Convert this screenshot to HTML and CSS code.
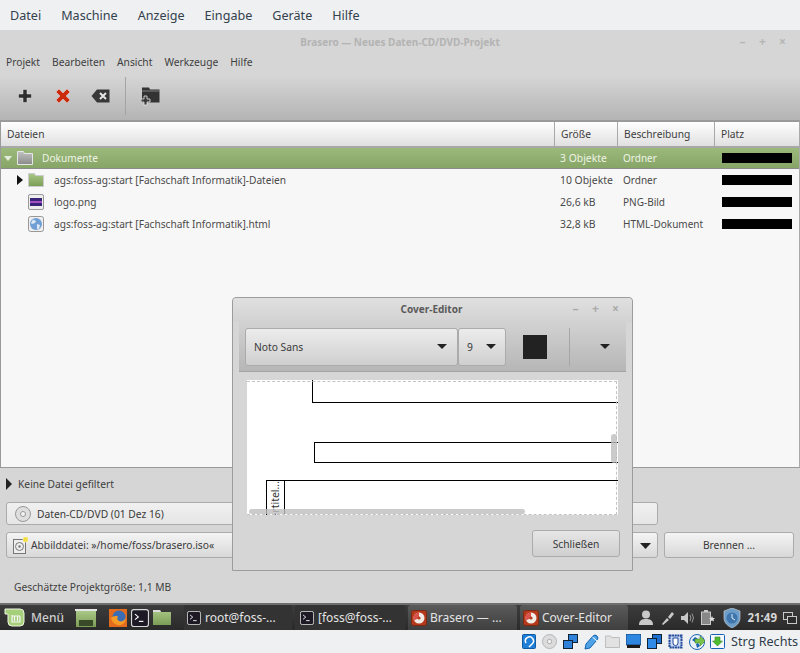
FILE: index.html
```html
<!DOCTYPE html>
<html lang="de">
<head>
<meta charset="utf-8">
<title>Brasero</title>
<link rel="stylesheet" href="styles.css">
</head>
<body>
<svg class="defs" width="0" height="0">
  <defs>
    <linearGradient id="gfolder" x1="0" y1="0" x2="0" y2="1"><stop offset="0" stop-color="#a9c786"/><stop offset="1" stop-color="#7b9d56"/></linearGradient>
    <linearGradient id="ggrey" x1="0" y1="0" x2="0" y2="1"><stop offset="0" stop-color="#c2c2c2"/><stop offset="1" stop-color="#8a8a8a"/></linearGradient>
    <symbol id="bras" viewBox="0 0 16 16"><rect x="0.5" y="0.5" width="15" height="15" rx="2" fill="#b5391c" stroke="#7d2a12"/><circle cx="8" cy="8" r="5.5" fill="#f2ece6"/><path d="M8 2.5A5.500 5.500 0 0 0 3 10.500L8 8z" fill="#d9534a"/><circle cx="8" cy="8" r="1.600" fill="#b5391c"/></symbol>
    <symbol id="term" viewBox="0 0 16 16"><rect x="0.5" y="0.5" width="15" height="15" rx="2" fill="#1d1a25" stroke="#d8d8d8"/><path d="M3.500 4.500L6.500 7L3.500 9.500" fill="none" stroke="#fff"/><path d="M7 11h4" stroke="#fff"/></symbol>
  </defs>
</svg>

<nav class="vm-menu">
  <span>Datei</span><span>Maschine</span><span>Anzeige</span><span>Eingabe</span><span>Geräte</span><span>Hilfe</span>
</nav>

<main class="app">
  <header class="app-title">
    <span class="app-title-text">Brasero — Neues Daten-CD/DVD-Projekt</span>
    <span class="wm-btns"><i>–</i><i>+</i><i>×</i></span>
  </header>
  <nav class="app-menu">
    <span>Projekt</span><span>Bearbeiten</span><span>Ansicht</span><span>Werkzeuge</span><span>Hilfe</span>
  </nav>
  <div class="toolbar">
    <svg class="tool" width="16" height="16" viewBox="0 0 16 16"><path d="M6 1.500h4v4.500h4.500v4H10v4.500H6V10H1.500V6H6z" fill="#2f2f2f" stroke="#e4e4e4" stroke-width=".5"/></svg>
    <svg class="tool tool-x" width="16" height="16" viewBox="0 0 16 16"><path d="M1 4l3-3 4 4 4-4 3 3-4 4 4 4-3 3-4-4-4 4-3-3 4-4z" fill="#cc2a0c" stroke="#e8d8d4" stroke-width=".5"/></svg>
    <svg class="tool tool-bs" width="19" height="14" viewBox="0 0 19 14"><path d="M6 0.500h12.500v13H6L0.500 7z" fill="#383838"/><path d="M9 4l6 6M15 4l-6 6" stroke="#e6e6e6" stroke-width="2"/></svg>
    <span class="tool-sep"></span>
    <svg class="tool" width="19" height="19" viewBox="0 0 19 19"><path d="M1 0.500h7l1 2h9.500v13H1z" fill="#333"/><path d="M1 4h17.500" stroke="#bbb" stroke-width=".6"/><path d="M3 9h3v3h3v3H6v3H3v-3H0v-3h3z" fill="#3a3a3a" stroke="#e8e8e8" stroke-width=".8"/></svg>
  </div>

  <section class="tree">
    <div class="tree-head">
      <div class="col-name">Dateien</div><div class="col-size">Größe</div><div class="col-desc">Beschreibung</div><div class="col-place">Platz</div>
    </div>
    <div class="tree-row tree-row-sel">
      <div class="col-name name-root">
        <svg class="expander" width="8" height="5" viewBox="0 0 8 5"><path d="M0 0h8L4 5z" fill="#e4ecd9"/></svg>
        <svg width="16" height="14" viewBox="0 0 16 14"><path d="M0.500 13.500V0.500h6l1 2h8v11z" fill="url(#ggrey)" stroke="#e6e6e6"/></svg>
        <span>Dokumente</span>
      </div>
      <div class="col-size">3 Objekte</div><div class="col-desc">Ordner</div><div class="col-place"><b class="bar"></b></div>
    </div>
    <div class="tree-row">
      <div class="col-name name-child">
        <svg class="expander-r" width="6" height="10" viewBox="0 0 6 10"><path d="M0 0l6 5-6 5z" fill="#111"/></svg>
        <svg width="16" height="14" viewBox="0 0 16 14"><path d="M0.500 13.500V0.500h6l1 2h8v11z" fill="url(#gfolder)" stroke="#ccc"/></svg>
        <span>ags:foss-ag:start [Fachschaft Informatik]-Dateien</span>
      </div>
      <div class="col-size">10 Objekte</div><div class="col-desc">Ordner</div><div class="col-place"><b class="bar"></b></div>
    </div>
    <div class="tree-row">
      <div class="col-name name-file">
        <svg width="16" height="16" viewBox="0 0 16 16"><rect x="0.500" y="0.500" width="15" height="15" rx="1.500" fill="#eee" stroke="#999"/><rect x="2" y="4" width="12" height="8" fill="#3a2478"/><path d="M2 7h12v2H2z" fill="#a24fc4"/></svg>
        <span>logo.png</span>
      </div>
      <div class="col-size">26,6 kB</div><div class="col-desc">PNG-Bild</div><div class="col-place"><b class="bar"></b></div>
    </div>
    <div class="tree-row">
      <div class="col-name name-file">
        <svg width="16" height="16" viewBox="0 0 16 16"><rect x="0.500" y="0.500" width="15" height="15" rx="2" fill="#eee" stroke="#999"/><circle cx="8" cy="8" r="6" fill="#6f9fd4"/><path d="M5 3.500l3 1.500-1 2-3 1-1-1zM9 8l3 1-1 4-2 0z" fill="#dfe9f4"/></svg>
        <span>ags:foss-ag:start [Fachschaft Informatik].html</span>
      </div>
      <div class="col-size">32,8 kB</div><div class="col-desc">HTML-Dokument</div><div class="col-place"><b class="bar"></b></div>
    </div>
  </section>

  <div class="filter">
    <svg width="6" height="12" viewBox="0 0 6 12"><path d="M0 0l6 6-6 6z" fill="#222"/></svg>
    <span>Keine Datei gefiltert</span>
  </div>
  <div class="disc-field">
    <svg width="16" height="16" viewBox="0 0 16 16"><circle cx="8" cy="8" r="7.500" fill="#dedede" stroke="#999"/><circle cx="8" cy="8" r="2.500" fill="#f4f4f4" stroke="#999"/></svg>
    <span>Daten-CD/DVD (01 Dez 16)</span>
  </div>
  <div class="action-row">
    <div class="image-field">
      <svg width="15" height="17" viewBox="0 0 15 17"><rect x="0.500" y="2.500" width="12" height="14" fill="#eee" stroke="#777"/><circle cx="6.500" cy="9.500" r="4" fill="none" stroke="#777"/><circle cx="6.500" cy="9.500" r="1.200" fill="#777"/><rect x="10" y="0" width="5" height="5" fill="#f0dc3c" stroke="#fff" stroke-width=".5"/></svg>
      <span>Abbilddatei: »/home/foss/brasero.iso«</span>
      <svg class="field-arrow" width="11" height="6" viewBox="0 0 11 6"><path d="M0 0h11L5.500 6z" fill="#222"/></svg>
    </div>
    <div class="burn-btn">Brennen ...</div>
  </div>
  <div class="estimate">Geschätzte Projektgröße: 1,1 MB</div>
</main>

<footer class="taskbar">
  <div class="menu-btn">
    <svg width="21" height="19" viewBox="0 0 21 19"><path d="M1 1h15a4 4 0 0 1 4 4v9a4 4 0 0 1-4 4H8a4 4 0 0 1-4-4V6H1z" fill="#a6cf7a" stroke="#eef6e4" stroke-width="1"/><path d="M8 7v7h8V8M10.500 13V8M13.500 13V8M8 8h8" fill="none" stroke="#f6f6f6" stroke-width="1.200"/></svg>
    <span>Menü</span>
  </div>
  <div class="launchers">
    <svg class="launch-show" width="22" height="18" viewBox="0 0 22 18"><rect x="0" y="0" width="22" height="2" fill="#e4e4e4"/><rect x="1" y="2" width="20" height="16" fill="url(#gfolder)"/><rect x="4" y="11" width="14" height="6" fill="#394a28"/></svg>
    <svg class="launch-ff" width="18" height="18" viewBox="0 0 18 18"><rect width="18" height="18" fill="#e26b1d"/><circle cx="10" cy="8" r="6.500" fill="#3a6db5"/><path d="M2 9c1 5 6 8 10 7 3-1 5-4 5-7-2 3-5 4-7 3-2-1-2-3-1-5-3 0-5 0-7 2z" fill="#f59c26"/></svg>
    <svg class="launch-term" width="18" height="18"><use href="#term"/></svg>
    <svg class="launch-folder" width="18" height="15" viewBox="0 0 18 15"><path d="M0 15V0h7l1 2h10v13z" fill="url(#gfolder)"/><path d="M0 0h7l1 2H0z" fill="#dcdcdc"/></svg>
  </div>
  <div class="task task-1"><svg width="14" height="14"><use href="#term"/></svg><span>root@foss-...</span></div>
  <div class="task task-2"><svg width="14" height="14"><use href="#term"/></svg><span>[foss@foss-...</span></div>
  <div class="task task-3"><svg width="16" height="16"><use href="#bras"/></svg><span>Brasero — ...</span></div>
  <div class="task task-4"><svg width="16" height="16"><use href="#bras"/></svg><span>Cover-Editor</span></div>
  <div class="tray">
    <svg width="14" height="15" viewBox="0 0 14 15"><circle cx="7" cy="4.500" r="4" fill="#c9c9c9"/><path d="M0 15c0-5 3-6 7-6s7 1 7 6z" fill="#c9c9c9"/></svg>
    <svg class="tray-wide" width="14" height="15" viewBox="0 0 14 15"><path d="M1 14l5-6 2 2-6 5zM7 7l4-5 2 2-4 5z" fill="#c9c9c9"/></svg>
    <svg width="14" height="12" viewBox="0 0 14 12"><path d="M0 4h3l4-4v12l-4-4H0z" fill="#c9c9c9"/><path d="M9 3q2 3 0 6M11 1.500q3 4.500 0 9" fill="none" stroke="#999"/></svg>
    <svg width="14" height="15" viewBox="0 0 14 15"><rect x="0.500" y="2" width="9" height="12.500" fill="#888" stroke="#c9c9c9"/><rect x="3" y="0" width="4" height="2" fill="#c9c9c9"/><path d="M11 6l1 2 2 0-1.500 1.500.5 2-2-1-2 1 .5-2L8 8h2z" fill="#ddd"/></svg>
    <svg class="tray-wide" width="18" height="20" viewBox="0 0 18 20"><path d="M9 0l8 3v7c0 5-4 8-8 10-4-2-8-5-8-10V3z" fill="#6d9ec9" stroke="#d8d8d8" stroke-width=".6"/><circle cx="9" cy="10" r="5.500" fill="#3f76ad"/><path d="M9 6v4l3 2" stroke="#e6eef6" fill="none"/></svg>
    <span class="clock">21:49</span>
    <svg width="14" height="12" viewBox="0 0 14 12"><rect x="0.500" y="0.500" width="9" height="7" fill="none" stroke="#c9c9c9"/><rect x="4.500" y="4.500" width="9" height="7" fill="#2d2d2d" stroke="#c9c9c9"/></svg>
  </div>
</footer>

<div class="statusbar">
  <svg width="14" height="15" viewBox="0 0 14 15"><rect x="0.500" y="0.500" width="13" height="14" rx="1" fill="#1f7fd6" stroke="#0d5aa5"/><path d="M4 9a4 4 0 1 1 6 1c-1 1-2 2-3 3" fill="none" stroke="#fff" stroke-width="1.500"/></svg>
  <svg width="15" height="15" viewBox="0 0 15 15"><circle cx="7.500" cy="7.500" r="7" fill="#dcdcdc" stroke="#b5b5b5"/><circle cx="7.500" cy="7.500" r="2.200" fill="#f2f2f2" stroke="#aaa"/></svg>
  <svg width="15" height="15" viewBox="0 0 15 15"><rect x="5.500" y="0.500" width="9" height="8" fill="#2f80d8" stroke="#123"/><rect x="0.500" y="6.500" width="9" height="8" fill="#2f80d8" stroke="#123"/></svg>
  <svg width="16" height="16" viewBox="0 0 16 16"><path d="M1 15l1-5 7-8q2-2 4 0t0 4l-7 8z" fill="#4fa2e6" stroke="#1260b0"/><path d="M8.500 3l4.500 4" stroke="#fff"/></svg>
  <svg class="tight" width="15" height="13" viewBox="0 0 15 13"><path d="M0.500 12.500V1h5l1 1.500h8v10z" fill="#e2e2e2" stroke="#bdbdbd"/></svg>
  <svg width="15" height="15" viewBox="0 0 15 15"><rect x="0" y="0" width="15" height="11" fill="#2d86e0" stroke="#12325a" stroke-width=".8"/><rect x="1" y="11" width="13" height="3" fill="#1a1a1a"/></svg>
  <svg width="15" height="15" viewBox="0 0 15 15"><rect x="5.500" y="0.500" width="9" height="9" fill="#1f6fd0" stroke="#123"/><rect x="0.500" y="4.500" width="9" height="10" fill="#2f8ae8" stroke="#123"/></svg>
  <svg width="15" height="15" viewBox="0 0 15 15"><rect x="1.500" y="1.500" width="12" height="12" fill="#c8d8f2" stroke="#20479a" stroke-dasharray="2 .6" stroke-width="2"/><path d="M5 4v5a2.500 2.500 0 0 0 5 0V4z" fill="#fff" stroke="#20479a"/></svg>
  <svg width="16" height="16" viewBox="0 0 16 16"><circle cx="8" cy="8" r="7.500" fill="#e8f0f8" stroke="#1c63b4"/><path d="M3 6l3-3 3 2-3 3zM7 10l2-1 2 3-3 2z" fill="#1c63b4"/><path d="M6 5h5V2l5 5-5 5V9H6z" fill="#7bc24a" stroke="#3d7f1c" stroke-width=".5"/></svg>
  <svg class="tight" width="15" height="15" viewBox="0 0 15 15"><rect x="0.500" y="0.500" width="14" height="14" rx="1" fill="#f4f8fc" stroke="#1660b5"/><path d="M5 3h5v4h2.500l-5 5-5-5H5z" fill="#4fbb30" stroke="#2b7d14" stroke-width=".5"/></svg>
  <span class="hostkey">Strg Rechts</span>
</div>

<section class="dialog">
  <header class="dialog-title">
    <span class="dialog-title-text">Cover-Editor</span>
    <span class="wm-btns dialog-btns"><i>–</i><i>+</i><i>×</i></span>
  </header>
  <div class="dialog-bar">
    <div class="combo combo-font"><span>Noto Sans</span><svg width="10" height="5" viewBox="0 0 10 5"><path d="M0 0h10L5 5z" fill="#222"/></svg></div>
    <div class="combo combo-size"><span>9</span><svg width="10" height="5" viewBox="0 0 10 5"><path d="M0 0h10L5 5z" fill="#222"/></svg></div>
    <span class="swatch"></span>
    <span class="dialog-sep"></span>
    <svg class="dialog-arrow" width="10" height="5" viewBox="0 0 10 5"><path d="M0 0h10L5 5z" fill="#222"/></svg>
  </div>
  <div class="canvas">
    <div class="box box-a"></div>
    <div class="box box-b"></div>
    <div class="box box-c"><span class="box-c-label"><span class="box-c-text">ertitel...</span></span></div>
    <div class="dash"></div>
    <div class="sb-v"></div>
    <div class="sb-h"></div>
  </div>
  <div class="dialog-foot"><div class="close-btn">Schließen</div></div>
</section>
</body>
</html>
```
FILE: styles.css
```css
* { box-sizing: border-box; }
html, body { margin: 0; padding: 0; }
body {
  width: 800px;
  height: 653px;
  overflow: hidden;
  position: relative;
  background: #eff0f2;
  font-family: "Noto Sans", sans-serif;
  font-size: 10.25px;
  color: #3a3a3a;
}
svg { display: block; flex: none; }
.defs { position: absolute; }

.vm-menu {
  height: 30px;
  display: flex;
  align-items: center;
  gap: 20px;
  padding: 0 0 0 10px;
  font-size: 12.6px;
  color: #33404d;
}

.app {
  height: 573px;
  display: flex;
  flex-direction: column;
  background: #d6d6d6;
}
.app-title {
  height: 24px;
  flex: none;
  display: flex;
  align-items: center;
  justify-content: center;
  position: relative;
}
.app-title-text { font-weight: 700; color: #b3b3b3; font-size: 10px; }
.wm-btns {
  position: absolute;
  right: 13px;
  top: 4px;
  display: flex;
  gap: 11px;
  color: #b5b5b5;
  font-weight: 700;
  font-size: 12px;
  line-height: 16px;
}
.wm-btns i { font-style: normal; width: 9px; text-align: center; }

.app-menu {
  height: 16px;
  flex: none;
  display: flex;
  align-items: center;
  gap: 12px;
  padding-left: 6px;
  color: #404040;
}
.toolbar {
  height: 50px;
  flex: none;
  display: flex;
  align-items: center;
  background: linear-gradient(#d6d6d6 10%, #b4b4b4);
  padding: 2px 0 0 17px;
}
.tool-x { margin-left: 22px; }
.tool-bs { margin-left: 20px; }
.tool-sep { width: 1px; height: 38px; background: #a4a4a4; margin: 0 15px 0 15px; }

.tree {
  height: 348px;
  flex: none;
  background: #f7f7f7;
  border: 1px solid #9a9a9a;
  border-top-width: 2px;
  border-right-color: #aaa;
}
.tree-head, .tree-row { display: flex; align-items: center; }
.tree-head {
  height: 26px;
  background: linear-gradient(#fff, #e0e0e0);
  border-bottom: 2px solid #a8a8a8;
  color: #404040;
}
.tree-head > div { height: 100%; display: flex; align-items: center; padding-left: 6px; }
.tree-head > div + div { border-left: 1px solid #a8a8a8; }
.tree-head .col-name { width: 553px; }
.tree-head .col-size { width: 63px; }
.tree-head .col-desc { width: 97px; }
.tree-head .col-place { width: 85px; }
.tree-row { height: 22px; color: #4a4a4a; }
.tree-row .col-name { width: 553px; display: flex; align-items: center; font-size: 10.15px; }
.tree-row .col-size { width: 63px; padding-left: 6px; white-space: nowrap; font-size: 10.4px; }
.tree-row .col-desc { width: 99px; padding-left: 6px; white-space: nowrap; font-size: 10px; }
.tree-row .col-place { width: 82px; padding-left: 6px; }
.tree-row-sel {
  height: 21px;
  color: #eef3e6;
  background: linear-gradient(#9bb97b, #87a566);
  border-bottom: 1px solid #8b8b8b;
}
.name-root { padding-left: 3px; }
.name-root svg + svg { margin-left: 5px; }
.name-root span { margin-left: 9px; }
.name-child { padding-left: 16px; }
.name-child svg + svg { margin-left: 5px; }
.name-child span { margin-left: 10px; }
.name-file { padding-left: 27px; }
.name-file span { margin-left: 10px; }
.bar { display: block; width: 70px; height: 10px; background: #000; }

.filter {
  height: 32px;
  flex: none;
  display: flex;
  align-items: center;
  gap: 6px;
  padding-left: 6px;
  color: #404040;
}
.disc-field, .image-field, .burn-btn {
  border: 1px solid #ababab;
  border-radius: 3px;
  background: linear-gradient(#f4f4f4, #d8d8d8);
  color: #3a3a3a;
}
.disc-field {
  height: 23px;
  flex: none;
  width: 652px;
  margin: 2px 0 0 6px;
  display: flex;
  align-items: center;
  gap: 6px;
  padding-left: 8px;
  background: linear-gradient(#f0f0f0, #e6e6e6);
}
.action-row {
  display: flex;
  gap: 6px;
  padding: 7px 0 0 6px;
  flex: none;
}
.image-field {
  width: 652px;
  height: 26px;
  display: flex;
  align-items: center;
  gap: 3px;
  padding-left: 6px;
  position: relative;
}
.field-arrow { position: absolute; right: 6px; top: 10px; }
.burn-btn {
  width: 130px;
  height: 26px;
  display: flex;
  align-items: center;
  justify-content: center;
}
.estimate { padding: 22px 0 0 14px; line-height: 15px; color: #404040; }

.taskbar {
  height: 27px;
  display: flex;
  align-items: stretch;
  position: relative;
  background: linear-gradient(#3c3c3c, #2a2a2a);
  border-top: 2px solid #6e6e6e;
  color: #e4e4e4;
}
.menu-btn {
  width: 72px;
  display: flex;
  align-items: center;
  gap: 6px;
  padding-left: 4px;
  font-size: 12px;
  font-weight: 500;
  color: #cfcfcf;
}
.launchers { width: 112px; display: flex; align-items: center; }
.launch-show { margin-left: 3px; }
.launch-ff { margin-left: 12px; }
.launch-term { margin-left: 4px; }
.launch-folder { margin-left: 4px; }
.task {
  display: flex;
  align-items: center;
  font-size: 12px;
  background: #3a3a3a;
  border-radius: 3px 3px 0 0;
  margin-right: 3px;
  white-space: nowrap;
  overflow: hidden;
}
.task-1 { width: 108px; background: #333; padding-left: 3px; gap: 4px; }
.task-2 { width: 110px; background: #333; padding-left: 5px; gap: 4px; }
.task-3 { width: 109px; background: linear-gradient(#5a5a5a, #3f3f3f); padding-left: 3px; gap: 3px; }
.task-4 { width: 108px; background: linear-gradient(#5a5a5a, #3f3f3f); padding-left: 3px; gap: 3px; margin-right: 0; }
.tray {
  margin-left: auto;
  display: flex;
  align-items: center;
  gap: 6px;
  padding-right: 3px;
}
.tray-wide { margin-left: 2px; }
.clock { font-weight: 700; font-size: 11.5px; color: #d6d6d6; }

.statusbar {
  height: 23px;
  display: flex;
  align-items: center;
  justify-content: flex-end;
  gap: 6px;
  padding-right: 2px;
  background: #eff0f2;
}
.tight { margin-left: -1px; }
.hostkey { font-size: 12.6px; color: #2f3d4a; }

.dialog {
  position: absolute;
  left: 232px;
  top: 297px;
  width: 401px;
  height: 274px;
  background: #d6d6d6;
  border: 1px solid #9c9c9c;
  border-radius: 4px 4px 0 0;
  display: flex;
  flex-direction: column;
  align-items: stretch;
}
.dialog-title {
  height: 24px;
  flex: none;
  position: relative;
  display: flex;
  align-items: center;
  justify-content: center;
  padding: 0 2px 2px 0;
  background: linear-gradient(#e0e0e0, #d2d2d2);
  border-radius: 4px 4px 0 0;
}
.dialog-title-text { font-weight: 700; color: #5a5a5a; font-size: 10px; }
.dialog-btns { right: 12px; top: 3px; color: #aaa; gap: 11px; }
.dialog-bar {
  height: 50px;
  flex: none;
  margin: 0 6px;
  display: flex;
  align-items: center;
  padding-left: 6px;
  background: linear-gradient(#d2d2d2, #b6b6b6);
  border-bottom: 1px solid #a2a2a2;
}
.combo {
  height: 38px;
  display: flex;
  align-items: center;
  justify-content: space-between;
  border: 1px solid #ababab;
  border-radius: 3px;
  background: linear-gradient(#ececec, #cfcfcf);
  color: #3a3a3a;
}
.combo-font { width: 213px; padding: 0 10px 0 8px; }
.combo-size { width: 48px; padding: 0 9px 0 8px; }
.swatch { width: 24px; height: 24px; background: #222; margin-left: 17px; }
.dialog-sep { width: 1px; height: 38px; background: #a6a6a6; margin-left: 22px; }
.dialog-arrow { margin-left: 30px; }
.canvas {
  height: 135px;
  flex: none;
  margin: 8px 14px 0 14px;
  background: #fff;
  position: relative;
  overflow: hidden;
}
.box { position: absolute; border: 1px solid #000; background: #fff; }
.box-a { left: 65px; top: -20px; width: 400px; height: 43px; }
.box-b { left: 67px; top: 62px; width: 400px; height: 21px; }
.box-c { left: 19px; top: 100px; width: 400px; height: 60px; }
.box-c-label {
  position: absolute;
  left: 0;
  top: 0;
  width: 18px;
  height: 60px;
  border-right: 1px solid #000;
  overflow: hidden;
}
.box-c-text {
  position: absolute;
  left: 2px;
  top: 0;
  font-size: 10.5px;
  line-height: 13px;
  white-space: nowrap;
  writing-mode: vertical-rl;
  transform: rotate(180deg);
  color: #333;
}
.dash {
  position: absolute;
  inset: 1px 1px 0 0;
  border: 1px dashed #c4c4c4;
  border-left: 0;
  height: 134px;
}
.sb-v { position: absolute; left: 364px; top: 54px; width: 6px; height: 29px; background: rgba(190, 190, 190, .8); border-radius: 3px; }
.sb-h { position: absolute; left: 2px; top: 129px; width: 276px; height: 5px; background: rgba(190, 190, 190, .8); border-radius: 3px; }
.dialog-foot { flex: 1; display: flex; justify-content: flex-end; align-items: flex-start; padding: 15px 12px 0 0; }
.close-btn {
  width: 88px;
  height: 27px;
  display: flex;
  align-items: center;
  justify-content: center;
  border: 1px solid #ababab;
  border-radius: 3px;
  background: linear-gradient(#e6e6e6, #cfcfcf);
  color: #3a3a3a;
}
```
